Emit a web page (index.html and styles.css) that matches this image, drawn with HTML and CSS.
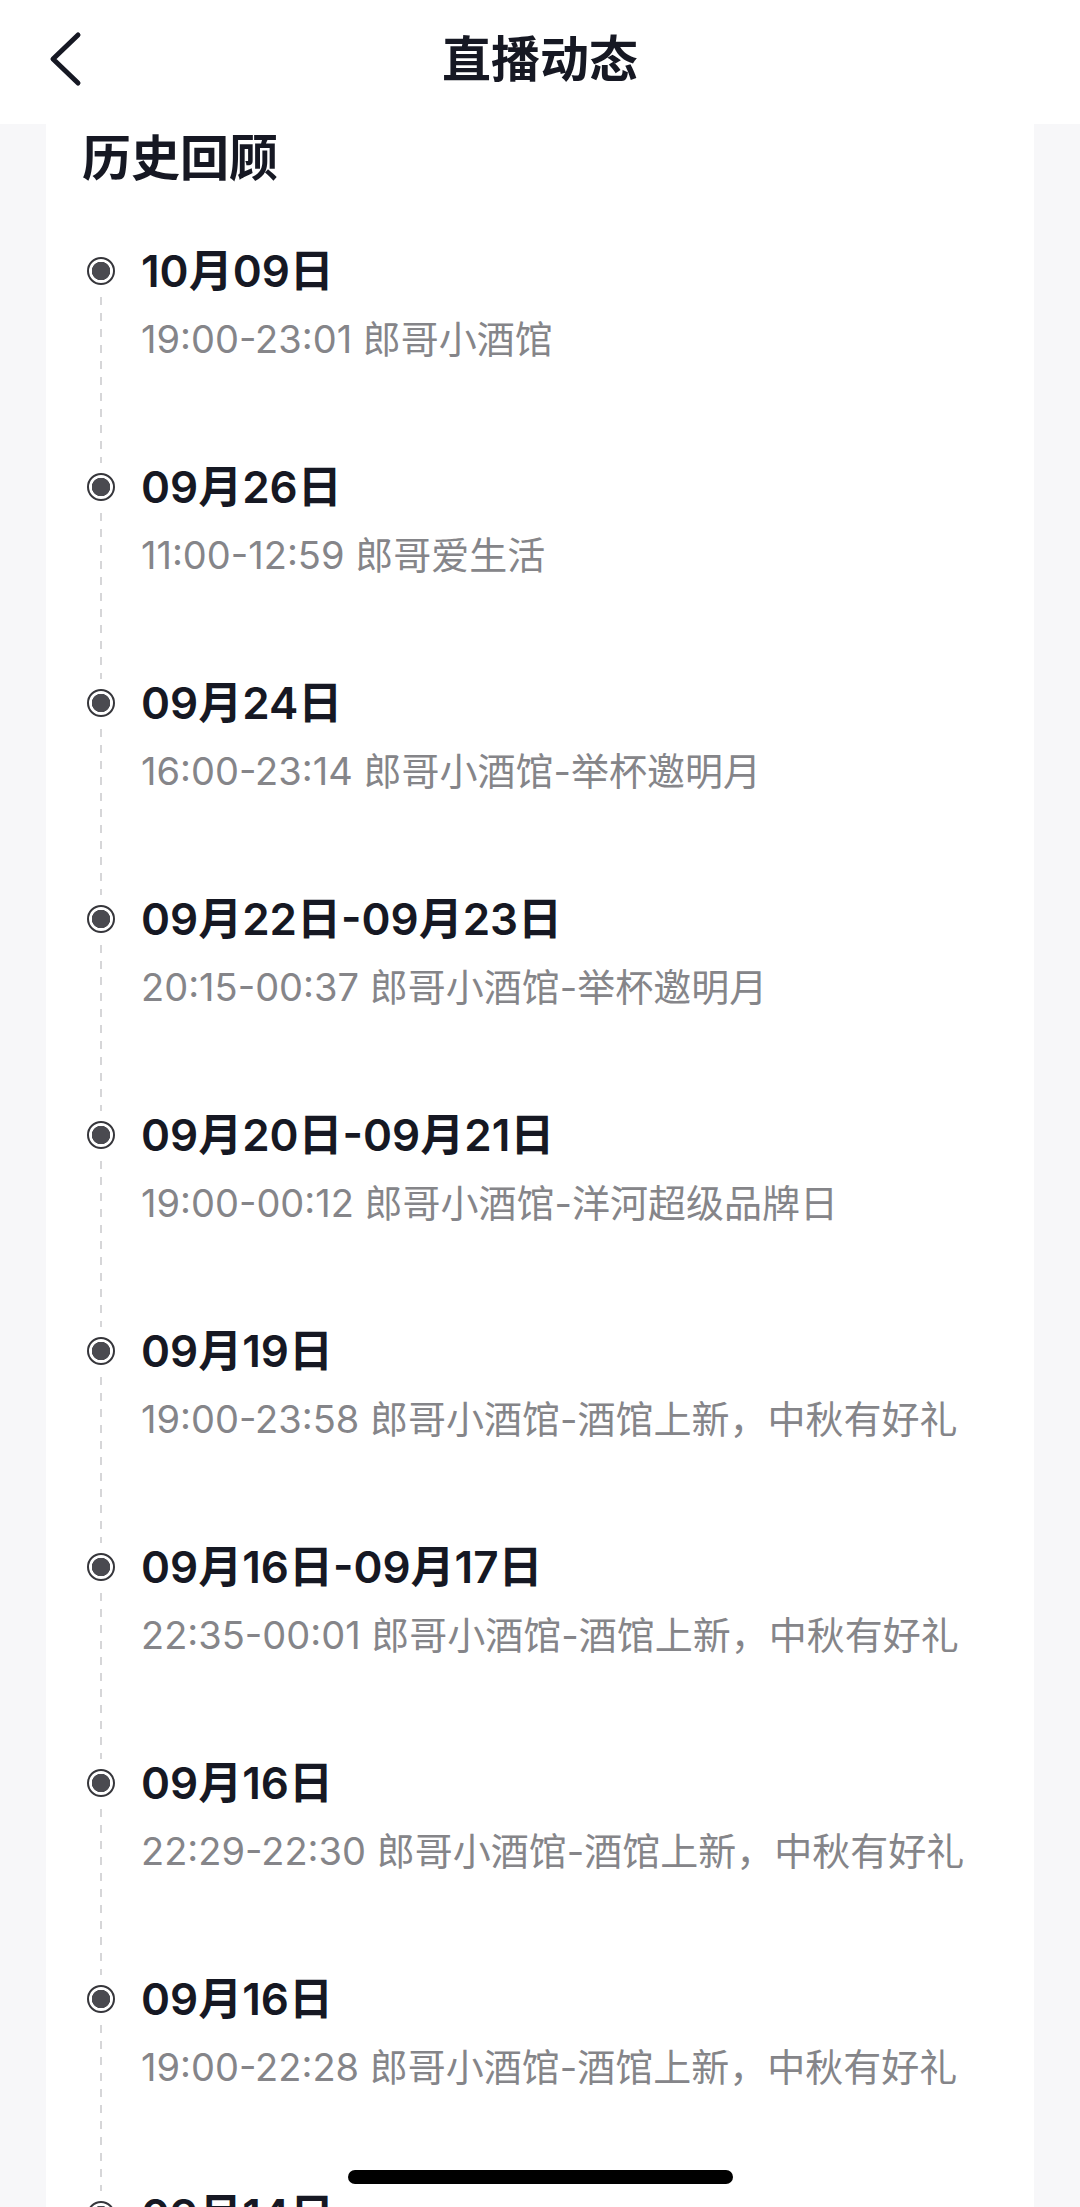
FILE: index.html
```html
<!DOCTYPE html>
<html>
<head>
    <meta charset="UTF-8">
    <meta name="viewport" content="width=device-width, initial-scale=1.0">
    <title>直播动态</title>
    <link rel="stylesheet" href="styles.css">
</head>
<body>
    <div class="nav-bar">
        <div class="nav-left">
            <svg class="back-icon" width="40" height="60" viewBox="0 0 40 60">
                <polyline points="34,5 9,29 34,53" fill="none" stroke="#161823" stroke-width="5" stroke-linecap="round" stroke-linejoin="round"/>
            </svg>
        </div>
        <div class="nav-title">直播动态</div>
        <div class="nav-right"></div>
    </div>

    <div class="history-card">
        <h2 class="history-title">历史回顾</h2>
        <div class="timeline">
            <div class="timeline-item">
                <div class="marker"><span class="dot"></span><span class="line"></span></div>
                <div class="info">
                    <div class="date">10月09日</div>
                    <div class="desc">19:00-23:01 郎哥小酒馆</div>
                </div>
            </div>
            <div class="timeline-item">
                <div class="marker"><span class="dot"></span><span class="line"></span></div>
                <div class="info">
                    <div class="date">09月26日</div>
                    <div class="desc">11:00-12:59 郎哥爱生活</div>
                </div>
            </div>
            <div class="timeline-item">
                <div class="marker"><span class="dot"></span><span class="line"></span></div>
                <div class="info">
                    <div class="date">09月24日</div>
                    <div class="desc">16:00-23:14 郎哥小酒馆-举杯邀明月</div>
                </div>
            </div>
            <div class="timeline-item">
                <div class="marker"><span class="dot"></span><span class="line"></span></div>
                <div class="info">
                    <div class="date">09月22日-09月23日</div>
                    <div class="desc">20:15-00:37 郎哥小酒馆-举杯邀明月</div>
                </div>
            </div>
            <div class="timeline-item">
                <div class="marker"><span class="dot"></span><span class="line"></span></div>
                <div class="info">
                    <div class="date">09月20日-09月21日</div>
                    <div class="desc">19:00-00:12 郎哥小酒馆-洋河超级品牌日</div>
                </div>
            </div>
            <div class="timeline-item">
                <div class="marker"><span class="dot"></span><span class="line"></span></div>
                <div class="info">
                    <div class="date">09月19日</div>
                    <div class="desc">19:00-23:58 郎哥小酒馆-酒馆上新，中秋有好礼</div>
                </div>
            </div>
            <div class="timeline-item">
                <div class="marker"><span class="dot"></span><span class="line"></span></div>
                <div class="info">
                    <div class="date">09月16日-09月17日</div>
                    <div class="desc">22:35-00:01 郎哥小酒馆-酒馆上新，中秋有好礼</div>
                </div>
            </div>
            <div class="timeline-item">
                <div class="marker"><span class="dot"></span><span class="line"></span></div>
                <div class="info">
                    <div class="date">09月16日</div>
                    <div class="desc">22:29-22:30 郎哥小酒馆-酒馆上新，中秋有好礼</div>
                </div>
            </div>
            <div class="timeline-item">
                <div class="marker"><span class="dot"></span><span class="line"></span></div>
                <div class="info">
                    <div class="date">09月16日</div>
                    <div class="desc">19:00-22:28 郎哥小酒馆-酒馆上新，中秋有好礼</div>
                </div>
            </div>
            <div class="timeline-item">
                <div class="marker"><span class="dot"></span><span class="line"></span></div>
                <div class="info">
                    <div class="date">09月14日</div>
                </div>
            </div>
        </div>
    </div>

    <div class="home-indicator"></div>
</body>
</html>
```

FILE: styles.css
```css
body {
    margin: 0;
    padding: 0;
    font-family: Inter, "Noto Sans CJK SC", sans-serif;
    background-color: #f7f7f9;
    color: #161823;
}
.nav-bar {
    height: 124px;
    box-sizing: border-box;
    padding-bottom: 4px;
    background-color: #fff;
    display: grid;
    grid-template-columns: 1fr auto 1fr;
    align-items: center;
}
.back-icon {
    display: block;
    margin-left: 44px;
}
.nav-title {
    font-size: 49px;
    font-weight: 600;
    line-height: 60px;
}
.history-card {
    margin: 0 46px;
    padding: 0 36px;
    background-color: #fff;
}
.history-title {
    margin: 0;
    height: 70px;
    line-height: 70px;
    font-size: 49px;
    font-weight: 600;
}
.timeline {
    margin-top: 49px;
}
.timeline-item {
    display: flex;
    height: 216px;
}
.marker {
    width: 38px;
    display: flex;
    flex-direction: column;
    align-items: center;
}
.dot {
    flex: none;
    width: 28px;
    height: 28px;
    margin-top: 14px;
    box-sizing: border-box;
    border: 2.5px solid #36363b;
    border-radius: 50%;
    background: radial-gradient(circle, #4a4a50 0 9px, #fff 9.5px);
}
.line {
    flex: 1;
    width: 2px;
    margin: 12px 0 -4px;
    background: repeating-linear-gradient(to bottom, #d6d6d8 0 8px, transparent 8px 16px);
}
.info {
    margin-left: 21px;
}
.date {
    font-size: 44px;
    font-weight: 600;
    line-height: 56px;
}
.desc {
    margin-top: 16px;
    font-size: 38px;
    line-height: 48px;
    color: #858589;
}
.home-indicator {
    position: fixed;
    left: 50%;
    bottom: 23px;
    width: 385px;
    height: 14px;
    margin-left: -192px;
    border-radius: 7px;
    background-color: #000;
}
```
